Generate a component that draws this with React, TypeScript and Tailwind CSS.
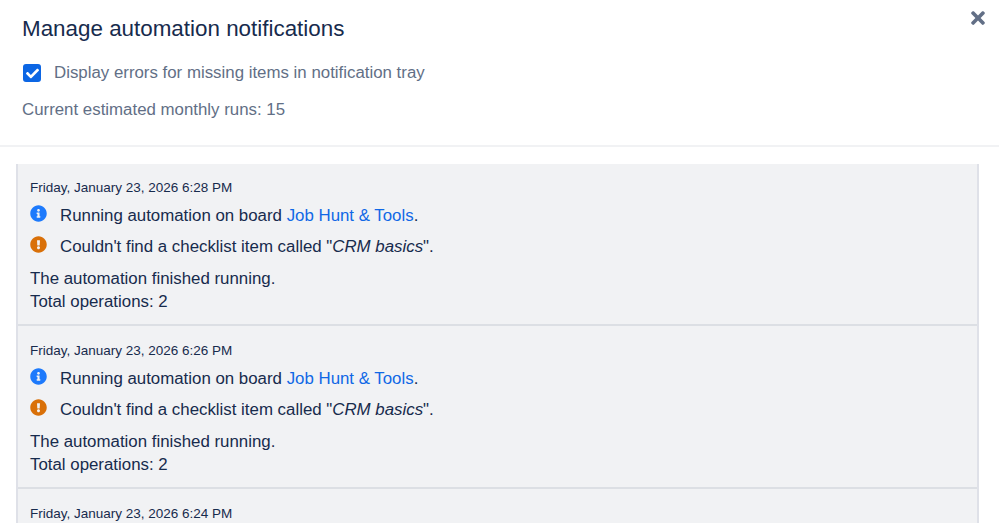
import { FaCheck, FaExclamationCircle, FaInfoCircle, FaTimes } from 'react-icons/fa'

const ENTRIES = ['6:28 PM', '6:26 PM', '6:24 PM']

function LogEntry({ time }: { time: string }) {
  return (
    <div className="h-[163px] shrink-0 border-b-2 border-[#dcdfe4] pl-[12px] pt-[16px]">
      <p className="text-[13.5px] leading-[18px] text-[#172b4d]">Friday, January 23, 2026 {time}</p>
      <div className="mt-[7px] flex h-[24px] items-center">
        <FaInfoCircle className="h-[17px] w-[17px] -translate-y-[3px] text-[#1d7afc]" />
        <p className="ml-[13px] text-[16.85px] text-[#172b4d]">
          Running automation on board <span className="text-[#1068e6]">Job Hunt &amp; Tools</span>.
        </p>
      </div>
      <div className="mt-[7px] flex h-[24px] items-center">
        <FaExclamationCircle className="h-[17px] w-[17px] -translate-y-[3px] text-[#d97008]" />
        <p className="ml-[13px] text-[16.85px] text-[#172b4d]">
          Couldn't find a checklist item called "<em>CRM basics</em>".
        </p>
      </div>
      <p className="mt-[8px] text-[16.85px] leading-[23px] text-[#172b4d]">The automation finished running.</p>
      <p className="text-[16.85px] leading-[23px] text-[#172b4d]">Total operations: 2</p>
    </div>
  )
}

export default function App() {
  return (
    <div className="relative flex h-[523px] w-[999px] flex-col overflow-hidden bg-white font-['Liberation_Sans',Arial,sans-serif]">
      <FaTimes className="absolute right-[12px] top-[8px] h-[20px] w-[18px] text-[#626f86]" />

      <header className="h-[147px] shrink-0 border-b-2 border-[#f1f2f4] pl-[22px] pt-[15px]">
        <h1 className="text-[22.4px] leading-[28px] text-[#172b4d]">Manage automation notifications</h1>
        <label className="mt-[18px] flex h-[24px] items-center">
          <span className="ml-px flex h-[18px] w-[18px] items-center justify-center rounded-[3px] bg-[#0c66e4]">
            <FaCheck className="h-[13px] w-[13px] text-white" />
          </span>
          <span className="ml-[13px] text-[16.85px] text-[#626f86]">Display errors for missing items in notification tray</span>
        </label>
        <p className="mt-[13px] text-[16.85px] leading-[24px] text-[#626f86]">Current estimated monthly runs: 15</p>
      </header>

      <section className="ml-[16px] mt-[17px] w-[963px] flex-1 overflow-hidden border-x-2 border-[#dfe1e8] bg-[#f1f2f4]">
        <div className="-mt-px flex flex-col">
          {ENTRIES.map(t => <LogEntry key={t} time={t} />)}
        </div>
      </section>
    </div>
  )
}
